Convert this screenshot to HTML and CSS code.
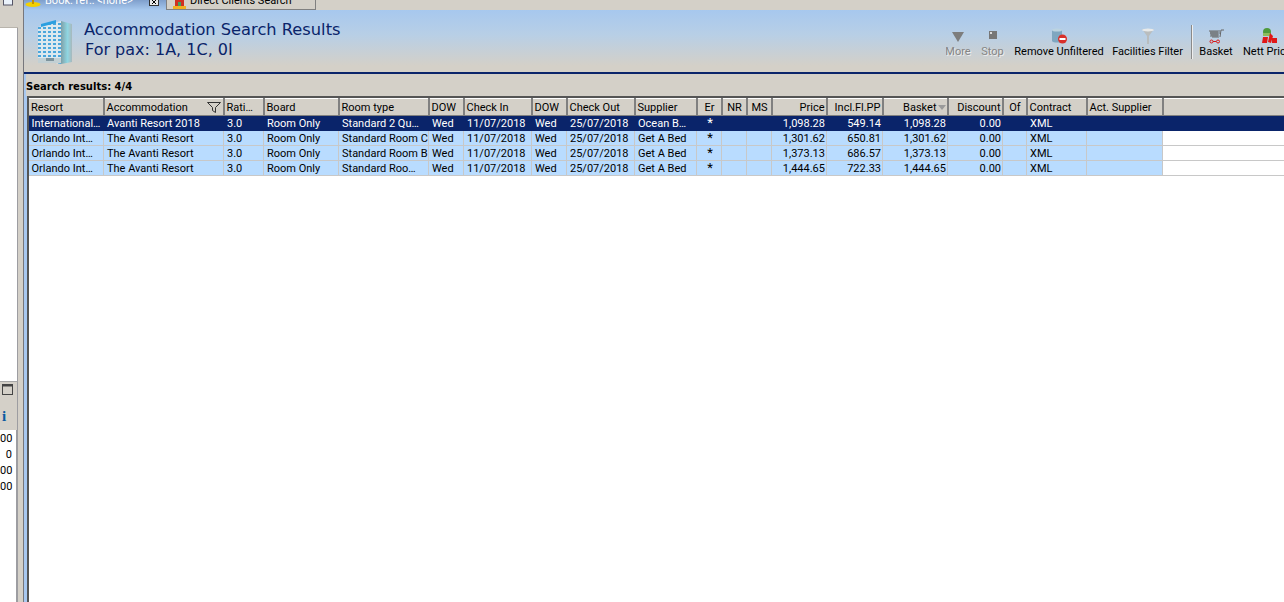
FILE: index.html
```html
<!DOCTYPE html>
<html lang="en">
<head>
<meta charset="utf-8">
<title>Accommodation Search Results</title>
<link rel="stylesheet" href="styles.css">
</head>
<body>
<div class="app">
  <aside class="side">
    <div class="side-top">
      <svg class="win-top" width="17" height="10" viewBox="0 0 17 10"><rect x="3.500" y="-4" width="9" height="9" fill="#eaf2fb" stroke="#556"/></svg>
    </div>
    <div class="side-white"></div>
    <div class="side-head">
      <svg width="11" height="11" viewBox="0 0 11 11"><rect x=".5" y=".5" width="10" height="10" fill="#d4d0c8" stroke="#444"/><rect x="1" y="1" width="9" height="1.500" fill="#444"/></svg>
    </div>
    <div class="side-col"><span class="info">i</span></div>
    <div class="side-values">
      <div>00</div><div>0</div><div>00</div><div>00</div>
    </div>
  </aside>
  <main class="main">
    <nav class="tabs">
      <div class="tab tab-active">
        <svg width="16" height="8" viewBox="0 0 16 8"><ellipse cx="8" cy="4.500" rx="7.500" ry="2.500" fill="#f2d000"/><rect x="7" y="0" width="2" height="4" fill="#c89000"/></svg>
        <span>Book. ref.: &lt;none&gt;</span>
        <svg class="close" width="10" height="6" viewBox="0 0 10 6"><rect x=".5" y="-3" width="9" height="8.500" fill="#e8e8e8" stroke="#333"/><path d="M3 0l4 4M7 0L3 4" stroke="#000"/></svg>
      </div>
      <div class="tab tab-other">
        <svg width="15" height="9" viewBox="0 0 15 9"><rect x="3" y="0" width="9" height="7" fill="#d03020"/><rect x="6" y="2" width="3" height="5" fill="#40a060"/><rect x="1" y="6" width="13" height="3" fill="#f0b020"/></svg>
        <span>Direct Clients Search</span>
      </div>
    </nav>
    <header class="banner">
      <svg class="hotel" width="36" height="47" viewBox="0 0 36 47">
        <defs>
          <pattern id="win" width="5" height="4" patternUnits="userSpaceOnUse"><rect width="5" height="4" fill="#dce8ee"/><rect x="1" y="1" width="3" height="2" fill="#4aa6dc"/></pattern>
          <linearGradient id="wing" x1="0" x2="1" y1="0" y2="0"><stop offset="0" stop-color="#7fa0a8"/><stop offset=".6" stop-color="#8fd6e2"/><stop offset="1" stop-color="#a8b8bc"/></linearGradient>
        </defs>
        <polygon points="1,9 24,3 24,46 1,42" fill="url(#win)"/>
        <polygon points="24,3 35,6 35,44 24,46" fill="url(#wing)"/>
        <polygon points="4,6 19,2 19,5 4,9" fill="#2b9fe0"/>
        <rect x="1" y="40" width="23" height="5" fill="#c2d0d4"/>
        <rect x="9" y="40" width="8" height="3" fill="#7d939c"/>
      </svg>
      <div class="titles">
        <h1>Accommodation Search Results</h1>
        <h2>For pax: 1A, 1C, 0I</h2>
      </div>
      <div class="tools">
        <button class="tool off w24">
          <svg width="12" height="16" viewBox="0 0 12 16"><path d="M0 4h12L6 14z" fill="#7d7d7d"/></svg>
          <span>More</span>
        </button>
        <button class="tool off w23">
          <svg width="12" height="16" viewBox="0 0 12 16"><rect x="2" y="3" width="8" height="8" fill="#777"/><rect x="3" y="4" width="2" height="2" fill="#ddd"/></svg>
          <span>Stop</span>
        </button>
        <button class="tool w90">
          <svg width="16" height="16" viewBox="0 0 16 16"><path d="M1 2v11c1 2 9 2 10 0V2z" fill="#7fa6c0"/><ellipse cx="6" cy="2" rx="5" ry="1.500" fill="#bcd3e0"/><circle cx="11.500" cy="11" r="4.500" fill="#d8302a"/><rect x="8.500" y="10" width="6" height="2" fill="#fff"/></svg>
          <span>Remove Unfiltered</span>
        </button>
        <button class="tool w67">
          <svg width="14" height="16" viewBox="0 0 14 16"><path d="M1 1h12L8 8v8H6V8z" fill="#b9bdbe"/><ellipse cx="7" cy="2" rx="6" ry="1.500" fill="#e8eaea"/></svg>
          <span>Facilities Filter</span>
        </button>
        <i class="tool-sep"></i>
        <button class="tool w32">
          <svg width="16" height="16" viewBox="0 0 16 16"><path d="M1 3h11M2 5h10M3 7h8M4 9h7M12 9l1-7h3" fill="none" stroke="#666"/><path d="M3 3v6M5 3v6M7 3v6M9 3v6" stroke="#666"/><circle cx="3.500" cy="13.500" r="1.500" fill="none" stroke="#d81818"/><circle cx="10" cy="13.500" r="1.500" fill="none" stroke="#d81818"/><path d="M5 13.500h3" stroke="#d81818"/></svg>
          <span>Basket</span>
        </button>
        <button class="tool tool-last">
          <svg width="17" height="16" viewBox="0 0 17 16"><circle cx="7" cy="4" r="4" fill="#4f9a3c"/><rect x="3" y="5" width="7" height="3" fill="#8cbc5c"/><path d="M3 9h5l-1 6H2zM10 5l3 3-2 7-3-1zM12 10h5v5h-5z" fill="#e01818"/></svg>
          <span>Nett Price</span>
        </button>
      </div>
    </header>
    <div class="summary">Search results: 4/4</div>
    <section class="grid-wrap">
      <table class="grid">
        <colgroup>
          <col class="c75"><col class="c120"><col class="c40"><col class="c75"><col class="c90"><col class="c35"><col class="c68"><col class="c35"><col class="c68"><col class="c62"><col class="c25"><col class="c25"><col class="c25"><col class="c55"><col class="c56"><col class="c65"><col class="c55"><col class="c24"><col class="c60"><col class="c76"><col>
        </colgroup>
        <thead>
          <tr>
            <th>Resort</th>
            <th class="filtered">Accommodation<svg class="funnel" width="14" height="11" viewBox="0 0 14 11"><path d="M.5.500h13L8.500 5.500v5l-3-2v-3z" fill="none" stroke="#333"/></svg></th>
            <th>Rati…</th>
            <th>Board</th>
            <th>Room type</th>
            <th>DOW</th>
            <th>Check In</th>
            <th>DOW</th>
            <th>Check Out</th>
            <th>Supplier</th>
            <th class="ctr">Er</th>
            <th class="ctr">NR</th>
            <th class="ctr">MS</th>
            <th class="num">Price</th>
            <th class="num">Incl.Fl.PP</th>
            <th class="num sorted">Basket<svg class="sort" width="8" height="5" viewBox="0 0 8 5"><path d="M0 0h8L4 5z" fill="#9a9a9a"/></svg></th>
            <th class="num">Discount</th>
            <th class="ctr">Of</th>
            <th>Contract</th>
            <th>Act. Supplier</th>
            <th class="filler"></th>
          </tr>
        </thead>
        <tbody>
          <tr class="sel">
            <td>International…</td><td>Avanti Resort 2018</td><td>3.0</td><td>Room Only</td><td>Standard 2 Qu…</td><td>Wed</td><td>11/07/2018</td><td>Wed</td><td>25/07/2018</td><td>Ocean B…</td><td class="ctr">*</td><td></td><td></td><td class="num">1,098.28</td><td class="num">549.14</td><td class="num">1,098.28</td><td class="num">0.00</td><td></td><td>XML</td><td></td><td></td>
          </tr>
          <tr>
            <td>Orlando Int…</td><td>The Avanti Resort</td><td>3.0</td><td>Room Only</td><td>Standard Room C</td><td>Wed</td><td>11/07/2018</td><td>Wed</td><td>25/07/2018</td><td>Get A Bed</td><td class="ctr">*</td><td></td><td></td><td class="num">1,301.62</td><td class="num">650.81</td><td class="num">1,301.62</td><td class="num">0.00</td><td></td><td>XML</td><td></td><td class="filler"></td>
          </tr>
          <tr>
            <td>Orlando Int…</td><td>The Avanti Resort</td><td>3.0</td><td>Room Only</td><td>Standard Room B</td><td>Wed</td><td>11/07/2018</td><td>Wed</td><td>25/07/2018</td><td>Get A Bed</td><td class="ctr">*</td><td></td><td></td><td class="num">1,373.13</td><td class="num">686.57</td><td class="num">1,373.13</td><td class="num">0.00</td><td></td><td>XML</td><td></td><td class="filler"></td>
          </tr>
          <tr>
            <td>Orlando Int…</td><td>The Avanti Resort</td><td>3.0</td><td>Room Only</td><td>Standard Roo…</td><td>Wed</td><td>11/07/2018</td><td>Wed</td><td>25/07/2018</td><td>Get A Bed</td><td class="ctr">*</td><td></td><td></td><td class="num">1,444.65</td><td class="num">722.33</td><td class="num">1,444.65</td><td class="num">0.00</td><td></td><td>XML</td><td></td><td class="filler"></td>
          </tr>
        </tbody>
      </table>
    </section>
  </main>
</div>
</body>
</html>
```
FILE: styles.css
```css
* { box-sizing: border-box; }
html, body { margin: 0; height: 100%; overflow: hidden; }
body { background: #d4d0c8; font: 11px Roboto, "Liberation Sans", Arial, sans-serif; color: #000; }
.app { display: flex; height: 602px; width: 1284px; }

.side { width: 23px; flex: none; display: flex; flex-direction: column; background: #d4d0c8; padding-right: 5px; }
.side-top { height: 28px; flex: none; border-bottom: 1px solid #b8b4ac; }
.win-top { display: block; }
.side-white { flex: none; height: 353px; background: #fff; border-right: 1px solid #9d9da1; }
.side-head { height: 22px; flex: none; padding: 2px 0 0 2px; border-right: 1px solid #9d9da1; border-top: 1px solid #a8a8a8; }
.side-head svg { display: block; }
.side-col { height: 27px; flex: none; text-align: center; background: #d4d0c8; border-right: 1px solid #9d9da1; padding-top: 5px; padding-right: 9px; }
.info { font: bold 15px "Liberation Serif", serif; color: #0a5aa0; }
.side-values { flex: 1; background: #fff; border-right: 2px solid #9d9da1; padding: 1px 4px 0 0; text-align: right; }
.side-values div { height: 16px; line-height: 16px; }

.main { flex: 1; min-width: 0; display: flex; flex-direction: column; background: #a8c8f0; border-left: 1px solid #77777c; }
.tabs { height: 10px; flex: none; display: flex; overflow: hidden; background: #d4d0c8; }
.tab { height: 10px; display: flex; align-items: flex-start; line-height: 10px; white-space: nowrap; }
.tab span { position: relative; top: -4px; }
.tab svg { flex: none; }
.tab-active { width: 142px; color: #fff; padding-left: 1px; gap: 4px; background: linear-gradient(#7f9fcc, #a7c8ee); }
.tab-other { width: 150px; padding-left: 5px; gap: 3px; border-left: 1px solid #808080; border-right: 1px solid #808080; border-bottom: 1px solid #808080; }
.tab .close { margin-left: 12px; }

.banner { height: 64px; flex: none; display: flex; align-items: flex-start; padding: 8px 0 0 13px; background: linear-gradient(#a7c8ee, #b8cfe6 40%, #d4d0c8 90%); border-bottom: 2px solid #0a246a; }
.hotel { flex: none; }
.titles { margin-left: 11px; color: #0a246a; }
h1, h2 { margin: 0; font: 400 16.25px/20px "DejaVu Sans", sans-serif; }
h1 { margin-top: 2px; }
h2 { font-size: 16px; padding-left: 1px; }
.tools { margin-left: auto; display: flex; height: 100%; padding-top: 10px; gap: 10px; white-space: nowrap; overflow: hidden; width: 338px; }
.tool { flex: none; border: 0; padding: 0; background: none; font: inherit; color: #000; display: flex; flex-direction: column; align-items: center; height: 34px; justify-content: flex-start; }
.tool svg { flex: none; margin-bottom: 1px; }
.w24 { width: 24px; } .w23 { width: 23px; margin-left: 1px; } .w90 { width: 90px; } .w67 { width: 67px; } .w32 { width: 32px; }
.tool-last { width: 50px; align-items: flex-start; margin-left: 1px; }
.tool-last svg { margin-left: 17px; }
.tool.off { color: #858585; text-shadow: 1px 1px 0 #eee; }
.tool-sep { flex: none; width: 2px; height: 34px; background: #8a8a8a; border-right: 1px solid #eee; margin: -3px -3px 0 0; }

.summary { height: 22px; flex: none; margin-left: 2px; background: #d4d0c8; padding: 7px 0 0 0; font: bold 10px "DejaVu Sans", sans-serif; }
.grid-wrap { flex: 1; margin-left: 3px; background: #fff; border-top: 2px solid #555; border-left: 2px solid #555; overflow: hidden; }
.grid { table-layout: fixed; border-collapse: collapse; width: 1258px; margin-left: -1px; }
.c24 { width: 24px; } .c25 { width: 25px; } .c35 { width: 35px; } .c40 { width: 40px; }
.c55 { width: 55px; } .c56 { width: 56px; } .c60 { width: 60px; } .c62 { width: 62px; }
.c65 { width: 65px; } .c68 { width: 68px; } .c75 { width: 75px; } .c76 { width: 76px; }
.c90 { width: 90px; } .c120 { width: 120px; }
th, td { padding: 0 1px 0 2px; font-weight: 400; text-align: left; overflow: hidden; white-space: nowrap; }
th { height: 17px; padding-bottom: 0; background: #d4d0c8; border-top: 1px solid #fff; border-left: 1px solid #fff; border-right: 2px solid #808080; border-bottom: 1px solid #808080; }
td { height: 15px; padding-left: 3px; background: #b9dcff; border-right: 1px solid #c8c8c8; border-bottom: 1px solid #c8c8c8; }
.num { text-align: right; }
.ctr { text-align: center; }
td.ctr { font-size: 13px; line-height: 13px; vertical-align: top; }
.filtered, .sorted { position: relative; }
.funnel { position: absolute; right: 2px; top: 3px; }
.sort { margin-left: 1px; vertical-align: middle; }
.sel td { background: #0a246a; color: #fff; border-color: #0a246a; }
td.filler { background: #fff; }
th.filler { border-right: 0; }
```
